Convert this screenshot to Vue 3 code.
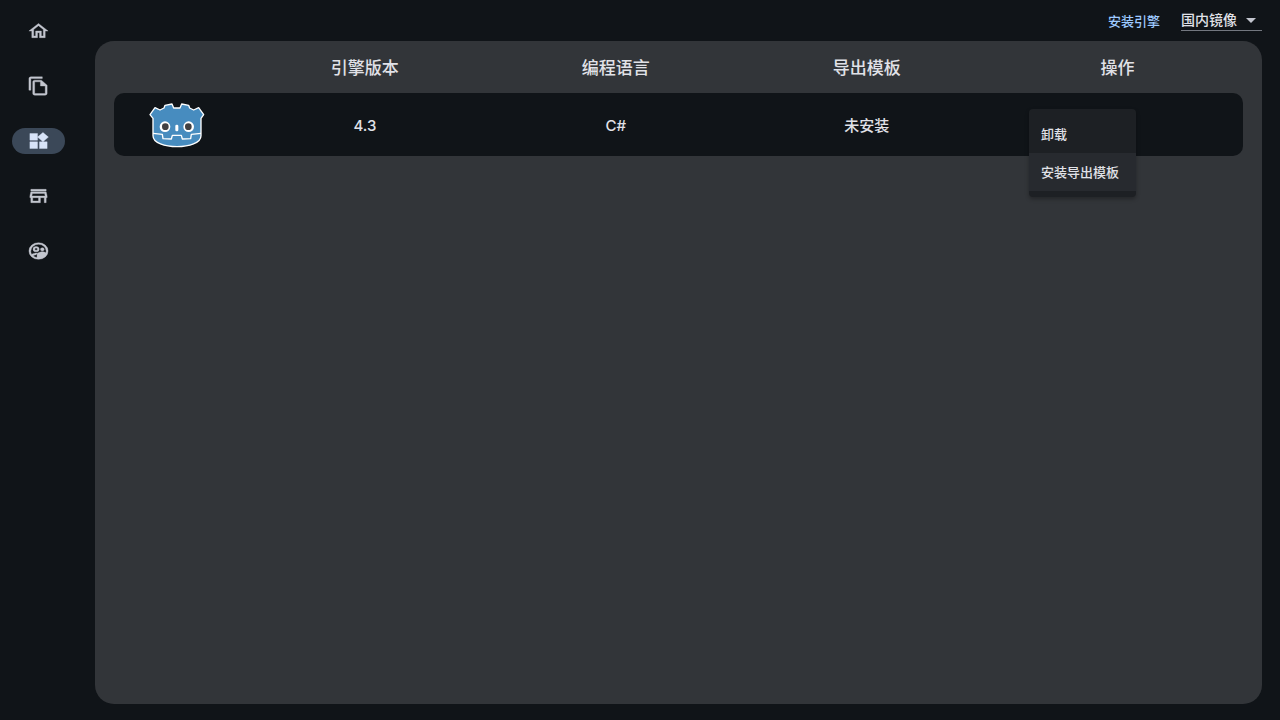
<template>
  <div class="shell">
    <nav class="sidebar" aria-label="主导航">
      <button
        v-for="item in navItems"
        :key="item.id"
        type="button"
        class="navBtn"
        :class="{ active: item.id === current }"
        :aria-label="item.label"
        @click="current = item.id"
      >
        <svg class="navIcon" viewBox="0 0 24 24" preserveAspectRatio="none">
          <path :d="item.icon" fill-rule="evenodd" />
        </svg>
      </button>
    </nav>

    <main class="main">
      <header class="topbar">
        <button type="button" class="installBtn">安装引擎</button>
        <div class="mirror">
          <select v-model="mirror" class="mirrorSelect" aria-label="下载源">
            <option value="cn">国内镜像</option>
            <option value="official">官方源</option>
          </select>
          <svg class="caret" viewBox="0 0 10 5"><path d="M0 0h10L5 5z" /></svg>
        </div>
      </header>

      <section class="panel">
        <table class="engines">
          <colgroup>
            <col class="colLogo" />
            <col v-for="c in columns" :key="c" />
          </colgroup>
          <thead>
            <tr>
              <th></th>
              <th v-for="c in columns" :key="c" scope="col">{{ c }}</th>
            </tr>
          </thead>
          <tbody>
            <tr v-for="e in engines" :key="e.version">
              <td>
                <!-- Godot -->
                <svg class="logo" viewBox="28 36 168 138" aria-label="Godot">
                  <path
                    class="logoBody"
                    d="M40 82 L31 71 L46 50 L61 57 L73 51 L76 43 L97 39 L102 51 L121 51 L126 39 L147 43 L150 51 L162 57 L177 50 L192 71 L184 82 V134 C184 178 40 178 40 134 Z"
                  />
                  <path
                    class="logoLine"
                    d="M40 127 L68 130 L70 143 L95 144 L98 133 H125 L128 144 L153 143 L155 130 L184 127"
                  />
                  <circle class="logoWhite" cx="76" cy="107" r="16" />
                  <circle class="logoWhite" cx="147" cy="107" r="16" />
                  <circle class="logoPupil" cx="77" cy="107" r="10" />
                  <circle class="logoPupil" cx="146" cy="107" r="10" />
                  <rect class="logoWhite" x="107" y="101" width="9" height="20" rx="4" />
                </svg>
              </td>
              <td>{{ e.version }}</td>
              <td>{{ e.language }}</td>
              <td>{{ e.template }}</td>
              <td class="actionCell">
                <div class="menu" role="menu">
                  <button
                    v-for="a in actions"
                    :key="a"
                    type="button"
                    role="menuitem"
                    class="menuItem"
                    :class="{ hovered: a === hovered }"
                    @mouseenter="hovered = a"
                  >
                    {{ a }}
                  </button>
                </div>
              </td>
            </tr>
          </tbody>
        </table>
      </section>
    </main>
  </div>
</template>

<script setup>
import { ref } from "vue";

const current = ref("engines");
const mirror = ref("cn");
const hovered = ref("安装导出模板");

const columns = ["引擎版本", "编程语言", "导出模板", "操作"];
const engines = [{ version: "4.3", language: "C#", template: "未安装" }];
const actions = ["卸载", "安装导出模板"];

const navItems = [
  {
    id: "home",
    label: "主页",
    icon: "M12 5.69l5 4.5V18h-2v-6H9v6H7v-7.81l5-4.5M12 3L2 12h3v8h6v-6h2v6h6v-8h3L12 3z",
  },
  {
    id: "projects",
    label: "项目",
    icon: "M16 1H4c-1.1 0-2 .9-2 2v14h2V3h12V1zM15 5H8c-1.1 0-1.99.9-1.99 2L6 21c0 1.1.89 2 1.99 2H19c1.1 0 2-.9 2-2V11l-6-6zM8 21V7h6v5h5v9H8z",
  },
  {
    id: "engines",
    label: "引擎",
    icon: "M13 13v8h8v-8h-8zM3 21h8v-8H3v8zM3 3v8h8V3H3zm13.66-1.31L11 7.34 16.66 13l5.66-5.66-5.66-5.65z",
  },
  {
    id: "store",
    label: "商店",
    icon: "M18.36 9l.6 3H5.04l.6-3h12.72M20 4H4v2h16V4zm0 3H4l-1 5v2h1v6h10v-6h4v6h2v-6h1v-2l-1-5zM6 18v-4h6v4H6z",
  },
  {
    id: "community",
    label: "社区",
    icon: "M12 2a10 10 0 1 0 0 20a10 10 0 1 0 0-20zM4 12a8 8 0 0 1 16 0c0 .7-.1 1.400-.3 2.100c-1-.8-2.600-1.200-3.700-1.200c-2.200 0-5.500 1.200-5.500 3.600v3.360c-1.600-.3-3-1.100-4.100-2.200c.8-.7 2-1.100 3.200-1.300c.3-.8.900-1.400 1.600-1.900c-2.200-.2-5 .5-6.300 1.700A8 8 0 0 1 4 12zM9.500 6.500a3.250 3.250 0 1 0 0 6.500a3.250 3.250 0 1 0 0-6.500zM9.500 8.400a1.350 1.350 0 1 1 0 2.700a1.350 1.350 0 1 1 0-2.700zM16 8a2 2 0 1 0 0 4a2 2 0 1 0 0-4z",
  },
];
</script>

<style>
body {
  background: #101418;
}
</style>

<style scoped>
.shell {
  display: flex;
  min-height: 100vh;
  background: #101418;
  color: #e1e2e8;
  font-family: Inter, "Noto Sans CJK SC", sans-serif;
  font-weight: 500;
}

.shell * {
  box-sizing: border-box;
}

.shell button,
.shell select {
  font-family: inherit;
  font-weight: inherit;
  border: none;
  background: transparent;
  padding: 0;
  cursor: pointer;
}

/* sidebar */
.sidebar {
  flex: 0 0 95px;
  display: flex;
  flex-direction: column;
  gap: 29px;
  padding: 18px 0 0 12px;
}

.shell .navBtn {
  width: 53px;
  height: 26px;
  border-radius: 13px;
  display: flex;
  align-items: center;
  justify-content: center;
  color: #c3c6cf;
}

.shell .navBtn.active {
  background: #3b4858;
  color: #d7e3f8;
}

.navIcon {
  width: 23px;
  height: 20px;
  fill: currentColor;
  stroke: currentColor;
  stroke-width: 0.4;
}

/* main */
.main {
  flex: 1;
  min-width: 0;
  display: flex;
  flex-direction: column;
  padding: 0 18px 16px 0;
}

.topbar {
  height: 41px;
  display: flex;
  align-items: center;
  justify-content: flex-end;
  gap: 21px;
}

.shell .installBtn {
  color: #9ecaff;
  font-size: 13px;
  line-height: 20px;
}

.mirror {
  position: relative;
  border-bottom: 1px solid #73777f;
}

.shell .mirrorSelect {
  appearance: none;
  display: block;
  width: 81px;
  height: 20px;
  color: #e1e2e8;
  font-size: 14px;
  line-height: 20px;
  outline: none;
}

.mirrorSelect option {
  background: #1d2024;
}

.caret {
  position: absolute;
  right: 6px;
  top: 8px;
  width: 10px;
  height: 5px;
  fill: #c3c6cf;
  pointer-events: none;
}

.panel {
  flex: 1;
  padding: 0 19px;
  border-radius: 19px;
  background: #323539;
}

/* table */
.engines {
  width: 100%;
  table-layout: fixed;
  border-collapse: separate;
  border-spacing: 0;
  text-align: center;
}

.colLogo {
  width: 11.11%;
}

.engines th {
  height: 52px;
  padding: 2px 0 0;
  font-size: 17px;
  line-height: 24px;
  font-weight: 500;
}

.engines td {
  height: 63px;
  padding: 2px 0 0;
  background: #101418;
  font-size: 15px;
  line-height: 20px;
}

.engines td:first-child {
  border-radius: 10px 0 0 10px;
}

.engines td:last-child {
  border-radius: 0 10px 10px 0;
}

.logo {
  display: block;
  width: 56px;
  height: 46px;
  margin: 0 auto;
}

.logoBody {
  fill: #478cbf;
  stroke: #fff;
  stroke-width: 4;
  stroke-linejoin: round;
}

.logoLine {
  fill: none;
  stroke: #fff;
  stroke-width: 4;
  stroke-linejoin: round;
}

.logoWhite {
  fill: #fff;
}

.logoPupil {
  fill: #414042;
}

/* action menu */
.actionCell {
  position: relative;
}

.menu {
  position: absolute;
  top: 16px;
  left: 37px;
  width: 107px;
  padding: 6px 0;
  border-radius: 4px;
  background: #1d2024;
  box-shadow: 0 2px 4px rgba(0, 0, 0, 0.3);
}

.shell .menuItem {
  display: block;
  width: 100%;
  height: 38px;
  padding: 0 12px;
  color: #e1e2e8;
  font-size: 13px;
  line-height: 20px;
  text-align: left;
  white-space: nowrap;
}

.shell .menuItem.hovered {
  background: #272a2f;
}
</style>
